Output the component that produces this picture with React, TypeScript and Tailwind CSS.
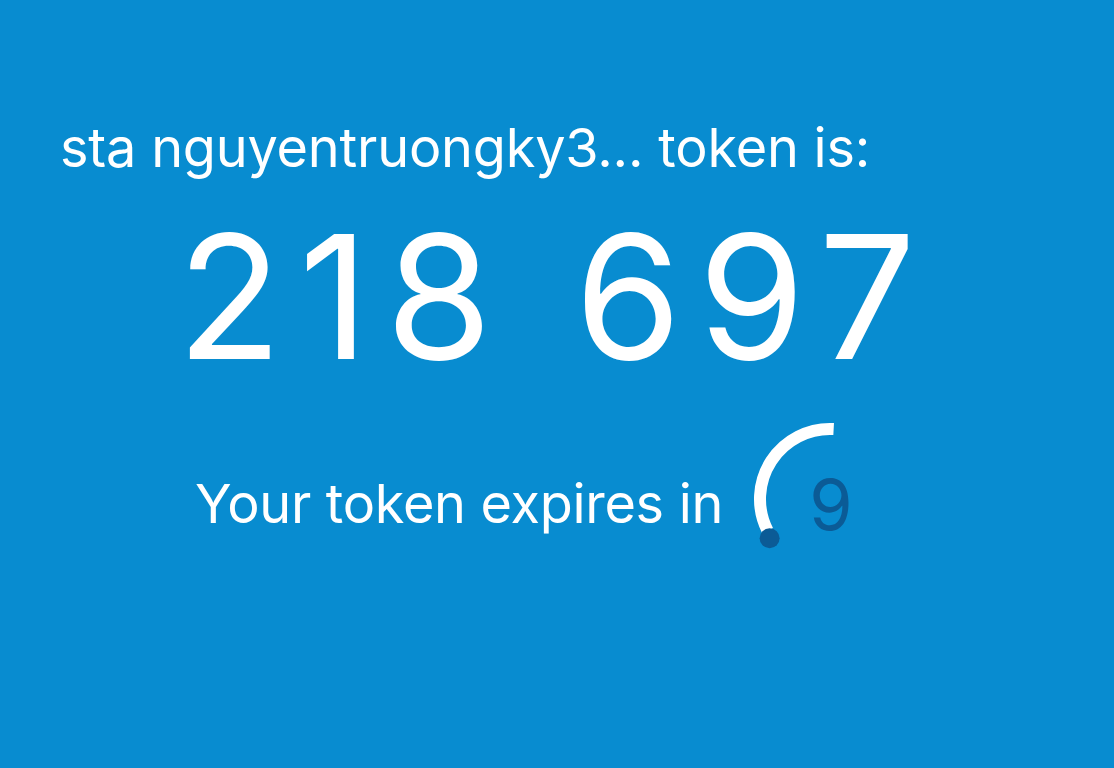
const polar = (cx: number, cy: number, r: number, deg: number) => {
  const a = (deg * Math.PI) / 180;
  return [cx + r * Math.cos(a), cy + r * Math.sin(a)];
};

function Countdown({ seconds }: { seconds: number }) {
  const size = 160;
  const mid = size / 2;
  const r = 70;
  // arc runs counter-clockwise from just past 12 o'clock down to the dot
  const [x1, y1] = polar(mid, mid, r, -87);
  const [x2, y2] = polar(mid, mid, r, 153);
  const [dx, dy] = polar(mid, mid, 72, 147);

  return (
    <div className="relative w-[160px] h-[160px] mt-[2px] ml-[27px]">
      <svg width={size} height={size} viewBox={`0 0 ${size} ${size}`} className="absolute inset-0">
        <path d={`M ${x1} ${y1} A ${r} ${r} 0 0 0 ${x2} ${y2}`} fill="none" stroke="#ffffff" strokeWidth="12" />
        <circle cx={dx} cy={dy} r="10" fill="#0b5b96" />
      </svg>
      <div className="absolute inset-0 flex items-center justify-center pt-[12px] pl-[2px]">
        <span className="text-[70px] leading-none text-[#0b5b96]">{seconds}</span>
      </div>
    </div>
  );
}

export default function App() {
  return (
    <div className="w-[1114px] h-[768px] bg-[#088cd0] text-white font-['Inter',sans-serif] overflow-hidden">
      <div className="pt-[118px] pl-[60px]">
        <p className="text-[54px] leading-[60px] tracking-[-0.2px]">sta nguyentruongky3... token is:</p>
      </div>
      <div className="pl-[177px] mt-[28px]">
        <p className="text-[172px] leading-[180px] tracking-[17px]">218 697</p>
      </div>
      <div className="flex items-start pl-[195px] mt-[31px]">
        <span className="mt-[57px] text-[54px] leading-[60px] tracking-[-0.3px]">Your token expires in</span>
        <Countdown seconds={9} />
      </div>
    </div>
  );
}
